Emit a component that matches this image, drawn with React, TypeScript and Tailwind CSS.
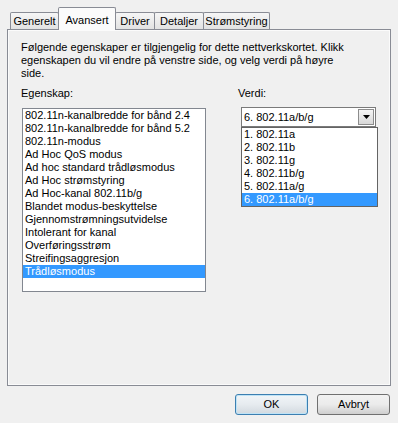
const PROPS = [
  "802.11n-kanalbredde for bånd 2.4",
  "802.11n-kanalbredde for bånd 5.2",
  "802.11n-modus",
  "Ad Hoc QoS modus",
  "Ad hoc standard trådløsmodus",
  "Ad Hoc strømstyring",
  "Ad Hoc-kanal 802.11b/g",
  "Blandet modus-beskyttelse",
  "Gjennomstrømningsutvidelse",
  "Intolerant for kanal",
  "Overføringsstrøm",
  "Streifingsaggresjon",
  "Trådløsmodus",
];

const VALUES = ["1. 802.11a", "2. 802.11b", "3. 802.11g", "4. 802.11b/g", "5. 802.11a/g", "6. 802.11a/b/g"];

const TABS = [
  { name: "Generelt", w: "w-[49px]" },
  { name: "Avansert", w: "w-[58px]", active: true },
  { name: "Driver", w: "w-[40px]" },
  { name: "Detaljer", w: "w-[50px]" },
  { name: "Strømstyring", w: "w-[67px]" },
];

export default function App() {
  return (
    <div className="w-[398px] h-[423px] bg-[#f0f0f0] text-[11px] text-black font-['Liberation_Sans',Arial,sans-serif] pt-[7px] overflow-hidden">
      {/* Faner */}
      <div className="relative z-10 flex items-end h-[22px] pl-[10px]">
        {TABS.map((t) =>
          t.active ? (
            <div key={t.name}
              className={`${t.w} -ml-px h-[23px] -mb-px flex items-start justify-center pt-[4px] border border-b-0 border-[#898c95] bg-[#fbfbfb] rounded-t-[2px]`}>
              {t.name}
            </div>
          ) : (
            <div key={t.name}
              className={`${t.w} -ml-px first:ml-0 h-[17px] flex items-center justify-center pt-px border border-b-0 border-[#898c95] bg-gradient-to-b from-[#f6f6f6] to-[#e2e2e2] rounded-t-[2px]`}>
              {t.name}
            </div>
          )
        )}
      </div>

      {/* Panel */}
      <div className="mx-[7px] h-[357px] border border-[#898c95] bg-[#f0f0f0] shadow-[inset_1px_1px_0_#fbfbfb,inset_-1px_-1px_0_#fbfbfb]">
        <div className="pl-[13px] pt-[11px]">
          <p className="leading-[13px]">
            Følgende egenskaper er tilgjengelig for dette nettverkskortet. Klikk
            <br />
            egenskapen du vil endre på venstre side, og velg verdi på høyre
            <br />
            side.
          </p>

          <div className="flex mt-[7px]">
            {/* Egenskap */}
            <div className="w-[185px]">
              <div className="h-[13px] leading-[13px]">Egenskap:</div>
              <div className="ml-[1px] mt-[8px] w-[184px] h-[184px] border border-[#828790] bg-white">
                {PROPS.map((p, i) => (
                  <div key={p}
                    className={
                      i === PROPS.length - 1
                        ? "h-[13px] leading-[13px] pl-[2px] bg-[#3399ff] text-white"
                        : "h-[13px] leading-[13px] pl-[2px]"
                    }>
                    {p}
                  </div>
                ))}
              </div>
            </div>

            {/* Verdi */}
            <div className="ml-[32px] w-[140px]">
              <div className="h-[13px] leading-[13px]">Verdi:</div>
              <div className="ml-[3px] mt-[7px] w-[135px] h-[20px] border border-[#7a7a7a] bg-white flex items-center">
                <span className="flex-1 pl-[2px] leading-[13px]">6. 802.11a/b/g</span>
                <div className="mr-[1px] w-[16px] h-[16px] border border-[#8c8c8c] bg-gradient-to-b from-[#f5f5f5] to-[#d8d8d8] flex items-center justify-center">
                  <svg width="7" height="4" viewBox="0 0 7 4">
                    <path d="M0 0h7L3.5 4z" fill="#000" />
                  </svg>
                </div>
              </div>
              <div className="ml-[3px] w-[137px] border border-[#646464] bg-white">
                {VALUES.map((v, i) => (
                  <div key={v}
                    className={
                      i === VALUES.length - 1
                        ? "h-[13px] leading-[13px] pl-[2px] bg-[#3399ff] text-white"
                        : "h-[13px] leading-[13px] pl-[2px]"
                    }>
                    {v}
                  </div>
                ))}
              </div>
            </div>
          </div>
        </div>
      </div>

      {/* Knapper */}
      <div className="flex justify-end gap-[9px] pr-[8px] mt-[8px]">
        <button className="w-[73px] h-[21px] rounded-[3px] border border-[#3c7fb1] bg-gradient-to-b from-[#f1f5f8] via-[#e6ebef] to-[#d2d9df] shadow-[inset_0_0_0_1px_#bfe3f6]">
          OK
        </button>
        <button className="w-[73px] h-[21px] rounded-[3px] border border-[#707070] bg-gradient-to-b from-[#f2f2f2] via-[#ebebeb] to-[#cfcfcf]">
          Avbryt
        </button>
      </div>
    </div>
  );
}
